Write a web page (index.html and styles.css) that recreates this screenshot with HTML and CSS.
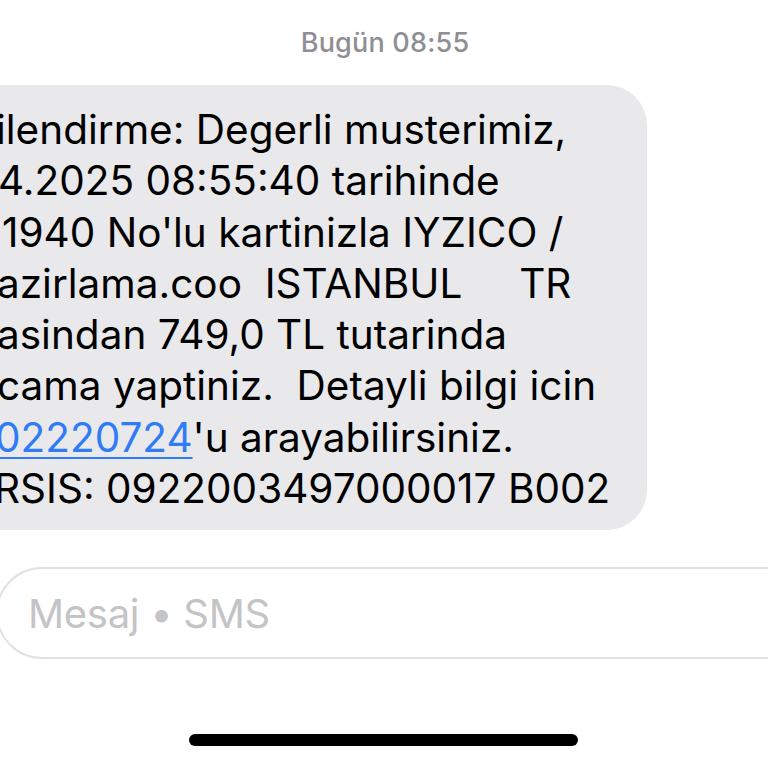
FILE: index.html
```html
<!DOCTYPE html>
<html lang="tr">
<head>
<meta charset="utf-8">
<title>Mesajlar</title>
<link rel="stylesheet" href="styles.css">
</head>
<body>
<div class="screen">
  <div class="stamp"><span class="day">Bugün</span> 08:55</div>
  <div class="bubble">
    <div class="line l1">ilendirme: Degerli musterimiz,</div>
    <div class="line l2">4.2025 08:55:40 tarihinde</div>
    <div class="line l3">1940 No'lu kartinizla IYZICO /</div>
    <div class="line l4">azirlama.coo  ISTANBUL     TR</div>
    <div class="line l5">asindan 749,0 TL tutarinda</div>
    <div class="line l6">cama yaptiniz.  Detayli bilgi icin</div>
    <div class="line l7"><span class="link">02220724</span>'u arayabilirsiniz.</div>
    <div class="line l8">RSIS: 0922003497000017 B002</div>
  </div>
  <div class="composer">
    <span class="placeholder">Mesaj • SMS</span>
  </div>
  <div class="home-indicator"></div>
</div>
</body>
</html>
```
FILE: styles.css
```css
html, body {
  margin: 0;
  padding: 0;
  background: #ffffff;
}
body {
  width: 768px;
  height: 768px;
  overflow: hidden;
  font-family: Inter, "Noto Sans", "Liberation Sans", sans-serif;
}
.screen {
  display: flex;
  flex-direction: column;
  align-items: flex-start;
  width: 768px;
  height: 768px;
}
.stamp {
  align-self: stretch;
  text-align: center;
  font-size: 27px;
  font-weight: 500;
  color: #8e8e93;
  padding-top: 27px;
  line-height: 32px;
  margin-left: 2px;
  letter-spacing: 0.2px;
}
.bubble {
  box-sizing: border-box;
  margin-top: 26px;
  margin-left: -40px;
  width: 687px;
  padding: 19px 20px 16px 40px;
  background: #e9e9eb;
  border-radius: 40px;
  color: #000000;
  font-size: 40.5px;
  line-height: 51.3px;
}
.line {
  white-space: pre;
}
.l1 { margin-left: -4px; }
.l2 { margin-left: -2px; }
.l3 { margin-left: 2px; }
.l4 { margin-left: -3px; }
.l5 { margin-left: -3px; }
.l6 { margin-left: -3px; }
.l7 { margin-left: -5px; }
.l8 { margin-left: -6px; }
.link {
  color: #2f7cf6;
  text-decoration: underline;
  text-decoration-thickness: 2px;
  text-underline-offset: 5px;
}
.composer {
  box-sizing: border-box;
  margin-top: 37px;
  margin-left: -4px;
  width: 820px;
  height: 92px;
  border: 2px solid #e1e1e3;
  border-radius: 46px;
  display: flex;
  align-items: center;
  padding-left: 30px;
}
.placeholder {
  font-size: 40px;
  color: #c4c4c6;
  letter-spacing: -0.3px;
}
.home-indicator {
  align-self: center;
  margin-top: 75px;
  width: 389px;
  height: 12px;
  border-radius: 6px;
  background: #000000;
  margin-left: -1px;
}
```
